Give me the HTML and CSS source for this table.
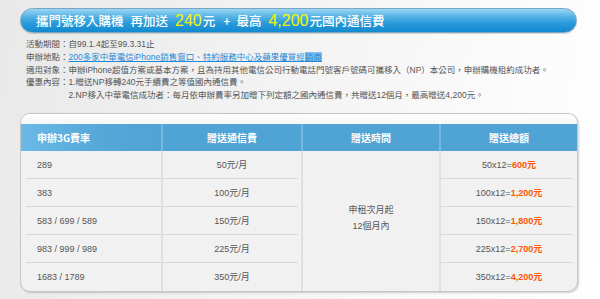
FILE: index.html
```html
<!DOCTYPE html>
<html lang="zh-Hant">
<head>
<meta charset="utf-8">
<title>攜門號移入購機</title>
<link rel="stylesheet" href="styles.css">
</head>
<body>
<div class="page">
  <div class="banner">
    <span class="b-txt">攜門號移入購機</span><span class="b-txt gap">再加送</span><span class="b-num">240</span><span class="b-txt">元</span><span class="b-txt plus">+</span><span class="b-txt">最高</span><span class="b-num">4,200</span><span class="b-txt">元國內通信費</span>
  </div>

  <div class="info">
    <div class="row"><span class="lbl">活動期間：</span><span class="val">自99.1.4起至99.3.31止</span></div>
    <div class="row"><span class="lbl">申辦地點：</span><span class="val"><a class="link" href="#">200多家中華電信iPhone銷售窗口、特約服務中心及蘋果優質經<span class="sel">銷商</span></a></span></div>
    <div class="row"><span class="lbl">適用對象：</span><span class="val">申辦iPhone超值方案或基本方案，且為持用其他電信公司行動電話門號客戶號碼可攜移入（NP）本公司，申辦購機租約成功者。</span></div>
    <div class="row"><span class="lbl">優惠內容：</span><span class="val"><span class="line">1.贈送NP移轉240元手續費之等值國內通信費。</span><span class="line">2.NP移入中華電信成功者：每月依申辦費率另加贈下列定額之國內通信費，共贈送12個月，最高贈送4,200元。</span></span></div>
  </div>

  <div class="card">
    <div class="card-top"></div>
    <table class="tbl">
      <thead>
        <tr>
          <th class="c1 first">申辦3G費率</th>
          <th class="c2">贈送通信費</th>
          <th class="c3">贈送時間</th>
          <th class="c4">贈送總額</th>
        </tr>
      </thead>
      <tbody>
        <tr>
          <td class="c1">289</td>
          <td class="c2">50元/月</td>
          <td class="c3 merged" rowspan="5">申租次月起<br>12個月內</td>
          <td class="c4">50x12=<b class="amt">600元</b></td>
        </tr>
        <tr>
          <td class="c1">383</td>
          <td class="c2">100元/月</td>
          <td class="c4">100x12=<b class="amt">1,200元</b></td>
        </tr>
        <tr>
          <td class="c1">583 / 699 / 589</td>
          <td class="c2">150元/月</td>
          <td class="c4">150x12=<b class="amt">1,800元</b></td>
        </tr>
        <tr>
          <td class="c1">983 / 999 / 989</td>
          <td class="c2">225元/月</td>
          <td class="c4">225x12=<b class="amt">2,700元</b></td>
        </tr>
        <tr class="last">
          <td class="c1">1683 / 1789</td>
          <td class="c2">350元/月</td>
          <td class="c4">350x12=<b class="amt">4,200元</b></td>
        </tr>
      </tbody>
    </table>
  </div>
</div>
</body>
</html>
```

FILE: styles.css
```css
html, body {
  margin: 0;
  padding: 0;
}
body {
  width: 600px;
  height: 299px;
  overflow: hidden;
  background: linear-gradient(100deg, #e9e9e9 0%, #f3f3f3 45%, #fbfbfb 80%, #ffffff 100%);
  font-family: "Liberation Sans", "Noto Sans CJK TC", sans-serif;
  color: #555;
}
.page {
  padding: 8px 0 0 20px;
  width: 557px;
}
.banner {
  border: 1px solid #7aa6c4;
  border-radius: 13px;
  background: linear-gradient(#9ad6f4 0%, #5bb6e6 30%, #2b9bda 60%, #1289d0 100%);
  box-shadow: 0 1px 1px rgba(0,0,0,0.15);
  display: flex;
  align-items: center;
  padding-left: 15px;
  box-sizing: border-box;
  height: 25px;
  color: #fff;
  white-space: nowrap;
}
.b-txt {
  font-family: "Noto Sans CJK TC", sans-serif;
  font-size: 12.5px;
  font-weight: 500;
}
.gap { margin-left: 7px; }
.plus { margin: 0 6px 0 8px; }
.b-num {
  font-family: "Liberation Sans", sans-serif;
  font-size: 16px;
  color: #f6f600;
  margin: 0 1px 0 7px;
}
.info {
  margin: 5px 0 0 6px;
  font-size: 8.5px;
  line-height: 12.8px;
  color: #555;
}
.row {
  display: flex;
}
.lbl {
  flex: none;
  white-space: nowrap;
}
.val {
  display: flex;
  flex-direction: column;
  white-space: nowrap;
}
.line { display: block; }
.link {
  color: #1f8ad3;
  text-decoration: underline;
}
.sel {
  background: #7fc1ee;
}
.card {
  margin-top: 11px;
  width: 556px;
  border: 1px solid #c6c6c6;
  border-radius: 10px;
  background: #f1f1f1;
  box-shadow: 1px 1px 2px rgba(0,0,0,0.18);
  overflow: hidden;
}
.card-top {
  height: 10px;
  background: linear-gradient(#ffffff, #f6f6f6);
}
.tbl {
  width: 100%;
  border-collapse: separate;
  border-spacing: 0;
  table-layout: fixed;
  font-size: 9px;
}
.c1 { width: 140px; }
.c2 { width: 140px; }
.c3 { width: 138px; }
.c4 { width: 138px; }
.tbl th {
  height: 27px;
  padding: 0;
  background: #50a3d5;
  color: #fff;
  font-family: "Noto Sans CJK TC", sans-serif;
  font-size: 10px;
  font-weight: 700;
  text-align: center;
  border-left: 2px solid #74b8e0;
  box-sizing: border-box;
}
.tbl th.first {
  border-left: 0;
  text-align: left;
  padding-left: 16px;
  background: linear-gradient(90deg, #6ab9e7 0%, #55a7d8 60%, #50a3d5 100%);
}
.tbl td {
  height: 28px;
  padding: 0;
  text-align: center;
  color: #555;
  border-left: 2px solid #e0e0e0;
  box-sizing: border-box;
  background-image: linear-gradient(#d9d9d9, #d9d9d9);
  background-repeat: no-repeat;
  background-size: 100% 1px;
  background-position: left bottom;
}
.tbl td.c1 {
  border-left: 0;
  text-align: left;
  padding-left: 16px;
  background-size: calc(100% - 5px) 1px;
  background-position: right bottom;
}
.tbl td.c2 {
  background-size: calc(100% - 3px) 1px;
  background-position: left bottom;
}
.tbl td.c4 {
  background-size: calc(100% - 4px) 1px;
  background-position: left bottom;
}
.tbl td.merged {
  background-image: none;
  line-height: 16px;
  padding-bottom: 6px;
}
.tbl tr.last td {
  background-image: none;
}
.amt {
  color: #ff5500;
  font-weight: 700;
}
```
